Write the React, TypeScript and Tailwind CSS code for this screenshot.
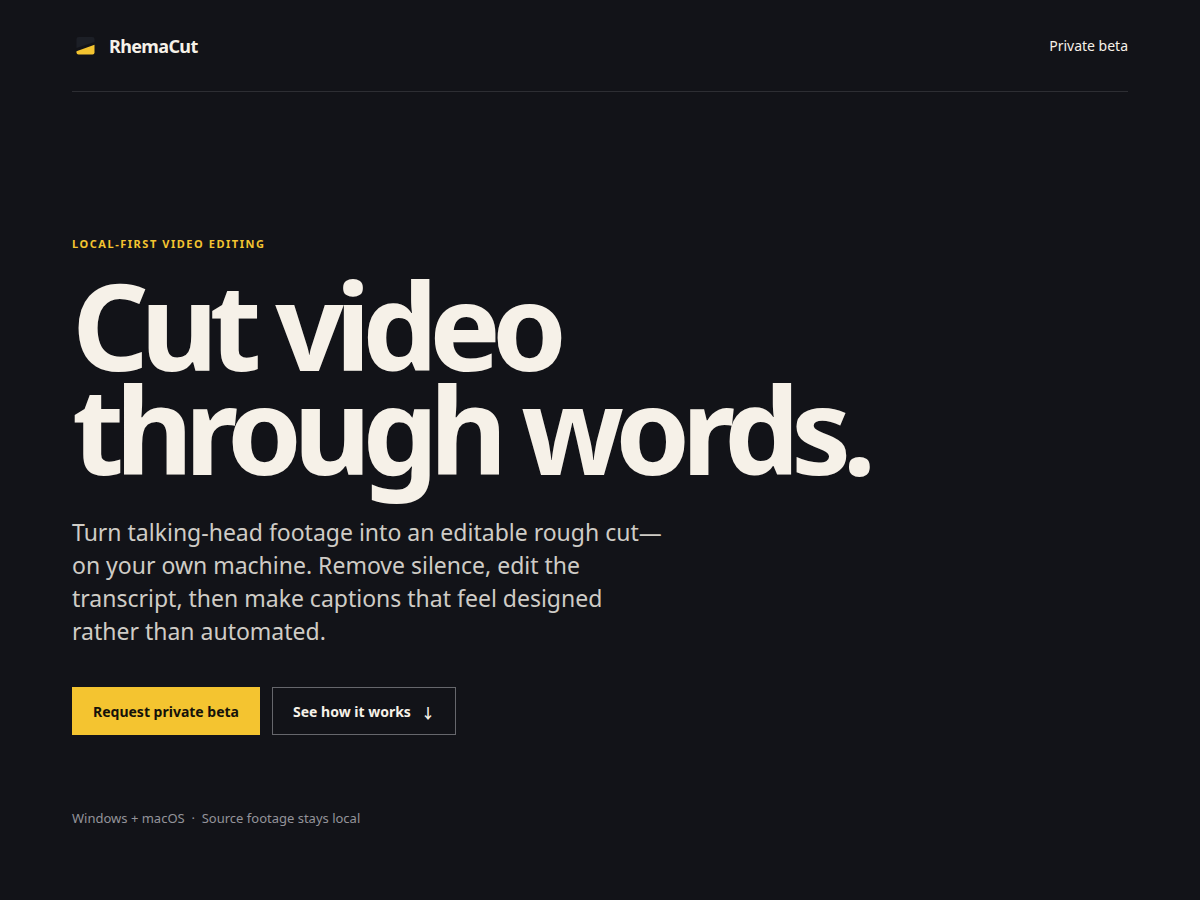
import React from 'react';

const BrandMark: React.FC = () => (
  <svg className="h-7 w-7" viewBox="0 0 28 28" aria-hidden="true">
    <path d="M6.500 5h14a2 2 0 0 1 2 2v3L4.500 16V7a2 2 0 0 1 2-2z" fill="#1c1f26" />
    <path d="M22.500 12.800v7.700a2 2 0 0 1-2 2h-14a2 2 0 0 1-2-2v-1.200z" fill="#f4c430" />
  </svg>
);

const Header: React.FC = () => (
  <header className="flex h-[92px] items-center justify-between border-b border-[#2d2e33]">
    <a href="#top" className="flex items-center gap-[9px] text-lg font-bold tracking-[-0.035em]">
      <BrandMark />
      <span>RhemaCut</span>
    </a>
    <a href="#beta" className="text-sm">
      Private beta
    </a>
  </header>
);

const Hero: React.FC = () => (
  <section className="pt-[144px] pb-[68px]">
    <p className="text-[11px] leading-4 font-bold tracking-[0.14em] text-[#f4c430] uppercase">
      Local-first video editing
    </p>
    <h1 className="mt-[21px] text-[120px] leading-[104px] font-bold tracking-[-0.073em]">
      Cut video
      <br />
      through words.
    </h1>
    <p className="mt-[35px] max-w-[600px] text-[23px] leading-[33px] text-[#cfccc6]">
      Turn talking-head footage into an editable rough cut—on your own machine. Remove silence, edit
      the transcript, then make captions that feel designed rather than automated.
    </p>
    <div className="mt-[39px] flex flex-wrap gap-3 text-sm font-bold">
      <a
        href="#beta"
        className="flex h-12 items-center border border-[#f4c430] bg-[#f4c430] px-5 pt-px text-[#15120a]"
      >
        Request private beta
      </a>
      <a href="#how" className="flex h-12 items-center gap-2.5 border border-[#66676c] px-5 pt-px">
        See how it works
        <span aria-hidden="true" className="font-['Noto_Sans_CJK_JP',sans-serif]">
          ↓
        </span>
      </a>
    </div>
    <p className="mt-[73px] text-[13px] leading-5 text-[#94939a]">
      Windows + macOS &nbsp;·&nbsp; Source footage stays local
    </p>
  </section>
);

export default function App() {
  return (
    <div
      id="top"
      className="min-h-screen bg-[#121318] font-['Noto_Sans','Liberation_Sans',sans-serif] text-[#f6f1e8]"
    >
      <div className="mx-auto max-w-[1280px] px-[72px]">
        <Header />
        <main>
          <Hero />
        </main>
      </div>
    </div>
  );
}
